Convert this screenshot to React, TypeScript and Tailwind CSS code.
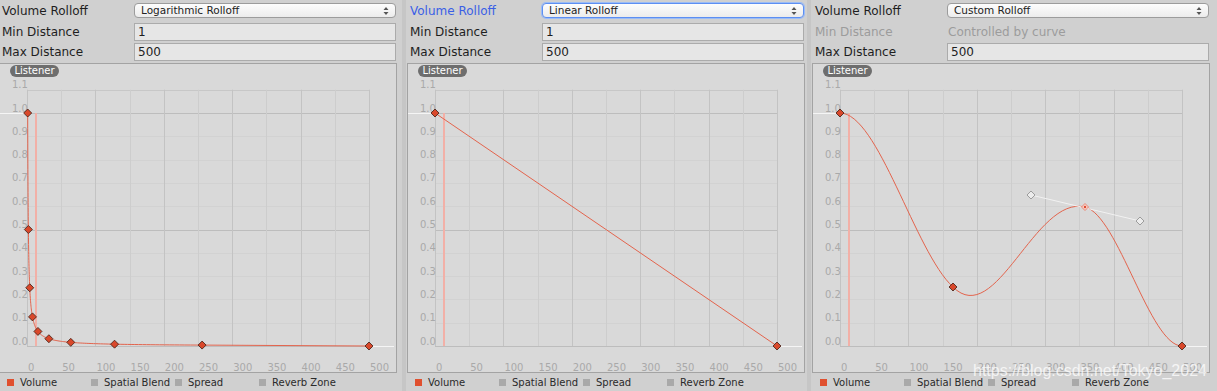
import React from "react";

type Kind = "log" | "linear" | "custom";

const X = (d: number) => 27 + d * 0.684;
const Y = (v: number) => 282 - 233 * v;

function Key({ x, y }: { x: number; y: number }) {
  return (
    <path
      d={`M${x},${y - 4} L${x + 4},${y} L${x},${y + 4} L${x - 4},${y} Z`}
      fill="#d9482b"
      stroke="#3d1c12"
      strokeWidth={0.8}
    />
  );
}

function Handle({ x, y }: { x: number; y: number }) {
  return (
    <path
      d={`M${x},${y - 4} L${x + 4},${y} L${x},${y + 4} L${x - 4},${y} Z`}
      fill="#ececec"
      stroke="#8a8a8a"
      strokeWidth={0.8}
    />
  );
}

function Curve({ kind }: { kind: Kind }) {
  if (kind === "linear") {
    return (
      <>
        <line x1={X(0)} y1={Y(1)} x2={X(500)} y2={Y(0)} stroke="#e3644d" strokeWidth={1} />
        <Key x={X(0)} y={Y(1)} />
        <Key x={X(500)} y={Y(0)} />
      </>
    );
  }

  if (kind === "log") {
    const pts: string[] = [];
    for (let t = 0; t <= 8.0001; t += 0.05) {
      const d = Math.pow(2, t);
      pts.push(`${X(d).toFixed(2)},${Y(1 / d).toFixed(2)}`);
    }
    pts.push(`${X(500)},${Y(0)}`);
    const keys = [0, 1, 2, 3, 4, 5, 6, 7, 8].map((k) => ({ d: Math.pow(2, k), v: Math.pow(2, -k) }));
    return (
      <>
        <polyline points={pts.join(" ")} fill="none" stroke="#e3644d" strokeWidth={1} />
        {keys.map((k) => (
          <Key key={k.d} x={X(k.d)} y={Y(k.v)} />
        ))}
        <Key x={X(500)} y={Y(0)} />
      </>
    );
  }

  // custom curve, drawn in pixel space
  return (
    <>
      <path
        d="M27,49 C65,49 102,188 140,223 C183,266 222,131 272,143 C305,151 337,282 369,282"
        fill="none"
        stroke="#e3644d"
        strokeWidth={1}
      />
      <line x1={218} y1={131} x2={327} y2={157} stroke="#f2f2f2" strokeWidth={1} />
      <Handle x={218} y={131} />
      <Handle x={327} y={157} />
      <path d="M272,139.5 L275.5,143 L272,146.5 L268.5,143 Z" fill="#f6d3cb" stroke="#e9735e" strokeWidth={0.8} />
      <circle cx={272} cy={143} r={1.2} fill="#e04a30" />
      <Key x={X(0)} y={Y(1)} />
      <Key x={140} y={223} />
      <Key x={X(500)} y={Y(0)} />
    </>
  );
}

function Graph({ kind }: { kind: Kind }) {
  const vs = [0, 1, 2, 3, 4, 5, 6, 7, 8, 9, 10];
  const hs = [0, 1, 2, 3, 4, 5, 6, 7, 8, 9, 10, 11];
  return (
    <div className="relative ml-[1px] mt-[2px] h-[310px] w-[398px] border border-[#a3a3a3] bg-[#d9d9d9]">
      <svg width={396} height={308} className="block">
        {hs.map((j) => (
          <line
            key={"h" + j}
            x1={X(0)}
            x2={X(500)}
            y1={Math.round(Y(j / 10)) + 0.5}
            y2={Math.round(Y(j / 10)) + 0.5}
            stroke={j === 0 || j === 5 || j === 10 ? "#bdbdbd" : j === 11 ? "#c7c7c7" : "#d2d2d2"}
            strokeWidth={1}
          />
        ))}
        {vs.map((i) => (
          <line
            key={"v" + i}
            x1={Math.round(X(i * 50)) + 0.5}
            x2={Math.round(X(i * 50)) + 0.5}
            y1={Y(1.1)}
            y2={Y(0)}
            stroke={i % 2 === 0 ? "#c3c3c3" : "#cdcdcd"}
            strokeWidth={1}
          />
        ))}
        {hs.map((j) => (
          <text
            key={"yl" + j}
            x={12}
            y={Y(j / 10) - 5}
            dominantBaseline="central"
            fontSize={10}
            fill="#a9a9a9"
          >
            {(j / 10).toFixed(1)}
          </text>
        ))}
        {vs.map((i) => (
          <text
            key={"xl" + i}
            x={X(i * 50) + 1}
            y={303}
            dominantBaseline="central"
            fontSize={10}
            fill="#a9a9a9"
          >
            {i * 50}
          </text>
        ))}
        {/* curve extensions outside the range */}
        <line x1={0} y1={Y(1) + 0.5} x2={X(0)} y2={Y(1) + 0.5} stroke="#f5f5f5" strokeWidth={1} />
        <line x1={X(500)} y1={Y(0) + 0.5} x2={394} y2={Y(0) + 0.5} stroke="#f5f5f5" strokeWidth={1} />
        {/* listener position */}
        <line x1={36} y1={Y(1)} x2={36} y2={Y(0)} stroke="#f2b0a7" strokeWidth={2} />
        <Curve kind={kind} />
      </svg>
      <div className="absolute left-[10px] top-[1px] flex h-[12px] w-[49px] items-center justify-center rounded-full bg-[#6e6e6e] text-[10px] leading-none text-white">
        Listener
      </div>
    </div>
  );
}

function Arrows() {
  return (
    <svg width={6} height={8} viewBox="0 0 6 8">
      <path d="M3,0 L5.5,3 L0.5,3 Z M0.5,5 L5.5,5 L3,8 Z" fill="#555" />
    </svg>
  );
}

function Legend() {
  const items = [
    { label: "Volume", color: "bg-[#e0502f]" },
    { label: "Spatial Blend", color: "bg-[#a9a9a9]" },
    { label: "Spread", color: "bg-[#a9a9a9]" },
    { label: "Reverb Zone", color: "bg-[#a9a9a9]" },
  ];
  return (
    <div className="flex h-[18px] items-center pl-[9px]">
      {items.map((it) => (
        <div key={it.label} className="flex w-[84px] items-center gap-[6px]">
          <span className={`h-[7px] w-[7px] ${it.color}`} />
          <span className="text-[10px] text-[#2a2a2a]">{it.label}</span>
        </div>
      ))}
    </div>
  );
}

function Panel({
  kind,
  rolloff,
  focused,
  className,
}: {
  kind: Kind;
  rolloff: string;
  focused?: boolean;
  className: string;
}) {
  const custom = kind === "custom";
  return (
    <div className={`relative flex shrink-0 flex-col border-l-[4px] border-[#c6c6c6] pt-[3px] ${className}`}>
      <div className="flex h-[15px] items-center">
        <div className={`w-[136px] pl-[4px] text-[12px] ${focused ? "text-[#3a5fe6]" : "text-[#1e1e1e]"}`}>
          Volume Rolloff
        </div>
        <div
          className={`flex h-[15px] w-[262px] items-center justify-between rounded-[4px] border bg-gradient-to-b from-[#fdfdfd] to-[#ececec] px-[6px] text-[10.5px] text-[#222] ${
            focused ? "border-[#5d8ff2] ring-1 ring-[#9bbcf6]" : "border-[#9c9c9c]"
          }`}
        >
          <span>{rolloff}</span>
          <Arrows />
        </div>
      </div>
      <div className="mt-[5px] flex h-[18px] items-center">
        <div className={`w-[136px] pl-[4px] text-[12px] ${custom ? "text-[#9c9c9c]" : "text-[#1e1e1e]"}`}>
          Min Distance
        </div>
        {custom ? (
          <div className="pl-[1px] text-[12px] text-[#9c9c9c]">Controlled by curve</div>
        ) : (
          <div className="flex h-[18px] w-[262px] items-center border border-[#ababab] bg-[#e6e6e6] pl-[3px] text-[12px] text-[#1e1e1e]">
            1
          </div>
        )}
      </div>
      <div className="mt-[2px] flex h-[18px] items-center">
        <div className="w-[136px] pl-[4px] text-[12px] text-[#1e1e1e]">Max Distance</div>
        <div className="flex h-[18px] w-[262px] items-center border border-[#ababab] bg-[#e6e6e6] pl-[3px] text-[12px] text-[#1e1e1e]">
          500
        </div>
      </div>
      <Graph kind={kind} />
      <Legend />
      {custom && (
        <div className="absolute left-[162px] top-[362px] font-['Liberation_Sans',sans-serif] text-[16px] leading-[18px] text-white/75">
          https://blog.csdn.net/Tokyo_2024
        </div>
      )}
    </div>
  );
}

export default function App() {
  return (
    <div className="flex h-[391px] w-[1217px] overflow-hidden bg-[#d0d0d0] font-['DejaVu_Sans',sans-serif]">
      <Panel kind="log" rolloff="Logarithmic Rolloff" className="-ml-[6px] w-[408px]" />
      <Panel kind="linear" rolloff="Linear Rolloff" focused className="w-[405px]" />
      <Panel kind="custom" rolloff="Custom Rolloff" className="w-[410px]" />
    </div>
  );
}
